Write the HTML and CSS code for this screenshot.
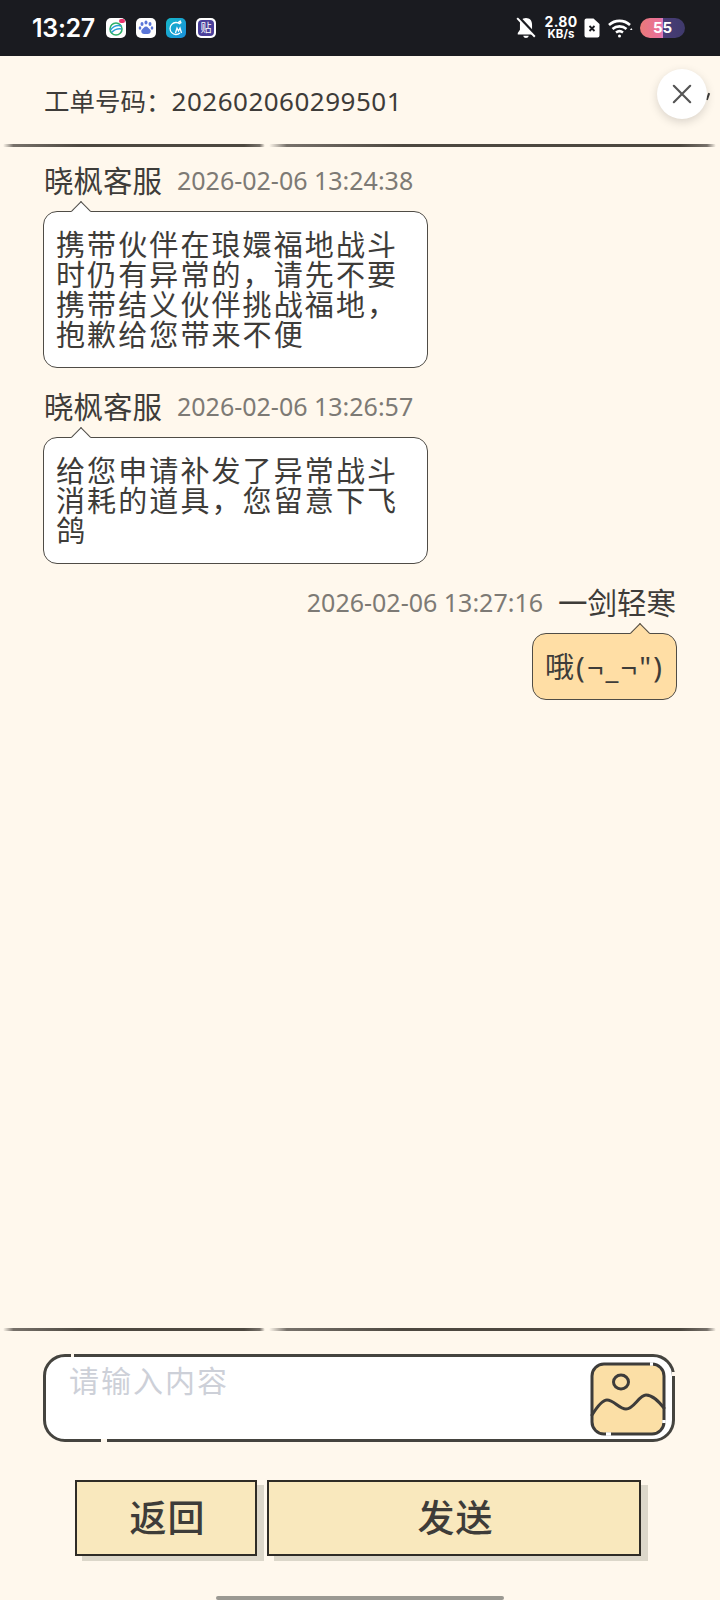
FILE: index.html
```html
<!DOCTYPE html>
<html lang="zh">

<head>
  <meta charset="utf-8">
  <title>工单详情</title>
  <link rel="stylesheet" href="styles.css">
</head>

<body>
  <div class="page">

    <div class="status">
      <div class="clock">13:27</div>
      <div class="app-icons">
        <div class="app app-white">
          <svg viewBox="0 0 20 20" width="20" height="20">
            <circle cx="10" cy="11" r="6" fill="none" stroke="#2fb06a" stroke-width="1.6" />
            <path d="M4.5 12c3-4 7-5 11-4M5.5 14.5c3-3 7-4 10-3.500" fill="none" stroke="#2c9fd8" stroke-width="1.5" />
            <rect x="13" y="1" width="6" height="4" rx="2" fill="#e8336d" />
          </svg>
        </div>
        <div class="app app-white">
          <svg viewBox="0 0 20 20" width="20" height="20" fill="#5a76d8">
            <ellipse cx="6" cy="6" rx="1.5" ry="2" />
            <ellipse cx="10" cy="4.5" rx="1.5" ry="2" />
            <ellipse cx="14" cy="6" rx="1.5" ry="2" />
            <ellipse cx="4" cy="10" rx="1.3" ry="1.8" />
            <ellipse cx="16" cy="10" rx="1.3" ry="1.8" />
            <path d="M10 8.5c-2 0-2.500 2-4 3-1.500 1.500-.5 4.500 2 4.500h4c2.500 0 3.500-3 2-4.500-1.500-1-2-3-4-3z" />
          </svg>
        </div>
        <div class="app app-teal">
          <svg viewBox="0 0 20 20" width="20" height="20" fill="none" stroke="#fff" stroke-width="1.3">
            <path d="M14 6a6 6 0 1 0 0 9" />
            <path d="M12 5a4 4 0 0 1 3-2M13.5 6a2 2 0 0 1 2-1.500" />
            <path d="M9.5 15l1.500-5 1.500 3 1.500-3 1.500 5" />
          </svg>
        </div>
        <div class="app app-white">
          <div class="app-tie">贴</div>
        </div>
      </div>

      <div class="status-right">
        <svg class="bell" viewBox="0 0 20 20" width="22" height="22">
          <path d="M10 1c-3.500 0-5.500 2.500-5.500 6v4.500L2.500 14.500v1.500h15v-1.500l-2-3V7c0-3.500-2-6-5.500-6zM7.500 17c.3 1.300 1.300 2 2.500 2s2.200-.7 2.500-2z" fill="#fff" />
          <path d="M3 0l16 17" stroke="#1a1b20" stroke-width="3" />
          <path d="M2 1l16 17" stroke="#fff" stroke-width="1.800" />
        </svg>
        <div class="speed">
          <div>2.80</div>
          <div class="speed-unit">KB/s</div>
        </div>
        <svg class="sim" viewBox="0 0 16 20" width="16" height="20">
          <path d="M2.5 0.500h7l6 5.500v11.500a2 2 0 0 1-2 2h-11a2 2 0 0 1-2-2v-15a2 2 0 0 1 2-2z" fill="#fff" />
          <path d="M5.5 8l5 5M10.500 8l-5 5" stroke="#1a1b20" stroke-width="1.8" />
        </svg>
        <svg class="wifi" viewBox="0 0 25 20" width="25" height="20" fill="none" stroke="#fff" stroke-width="2.6">
          <path d="M1 7c6-5.500 15-5.500 21 0" />
          <path d="M4.500 11c4-3.500 10-3.500 14 0" />
          <path d="M8 14.500c2-1.500 5-1.500 7 0" />
          <circle cx="11.5" cy="18" r="1.5" fill="#fff" stroke="none" />
          <path d="M22 12l2.500 0-1.200-2z" fill="#fff" stroke="none" />
        </svg>
        <div class="battery">55</div>
      </div>
    </div>

    <div class="ticket">工单号码：<span class="ticket-no">202602060299501</span></div>
    <div class="rule"><span class="rule-short"></span><span class="rule-long"></span></div>

    <div class="messages">
      <div class="msg">
        <div class="msg-head">
          <div class="msg-name">晓枫客服</div>
          <div class="msg-time">2026-02-06 13:24:38</div>
        </div>
        <div class="bubble">携带伙伴在琅嬛福地战斗时仍有异常的，请先不要携带结义伙伴挑战福地，抱歉给您带来不便</div>
      </div>

      <div class="msg">
        <div class="msg-head">
          <div class="msg-name">晓枫客服</div>
          <div class="msg-time">2026-02-06 13:26:57</div>
        </div>
        <div class="bubble">给您申请补发了异常战斗消耗的道具，您留意下飞鸽</div>
      </div>

      <div class="msg msg-mine">
        <div class="msg-head">
          <div class="msg-time">2026-02-06 13:27:16</div>
          <div class="msg-name">一剑轻寒</div>
        </div>
        <div class="bubble">哦(¬_¬")</div>
      </div>
    </div>

    <div class="rule"><span class="rule-short"></span><span class="rule-long"></span></div>

    <div class="input-wrap">
      <div class="input-box">
        <div class="placeholder">请输入内容</div>
        <svg class="pic" viewBox="0 0 78 74" width="78" height="74" fill="none" stroke="#3d3c3a" stroke-width="3" stroke-linecap="round" stroke-linejoin="round">
          <path d="M15 2h48a12 12 0 0 1 12 12v46a12 12 0 0 1-12 12H15a12 12 0 0 1-12-12V14A12 12 0 0 1 15 2z" fill="#fbdfa6" />
          <ellipse cx="32" cy="20" rx="7.5" ry="7" />
          <path d="M3 53C8 45 13 38 18 38c7 0 12 9 19 9 8 0 13-14 20-14 7 0 13 7 18 13" />
          <path d="M61 2h3M75 58v3M17 72h5" stroke="#fff" stroke-width="3.5" stroke-linecap="butt" />
        </svg>
        <span class="nick nick-top"></span>
        <span class="nick nick-bottom"></span>
        <span class="nick nick-right"></span>
      </div>
    </div>

    <div class="actions">
      <div class="btn btn-back">返回</div>
      <div class="btn btn-send">发送</div>
    </div>

    <div class="home-wrap"><div class="home-bar"></div></div>

    <div class="close-tick"></div>
    <div class="close">
      <svg viewBox="0 0 22 22" width="20" height="20" stroke="#555" stroke-width="2.4" stroke-linecap="round">
        <path d="M2 2l18 18M20 2L2 20" />
      </svg>
    </div>
  </div>
</body>

</html>
```

FILE: styles.css
```css
html,
body {
  margin: 0;
  padding: 0;
}

body {
  font-family: "Noto Sans", "Noto Sans CJK SC", sans-serif;
  color: #3e3c39;
  background: #fff8ed;
}

.page {
  position: relative;
  display: flex;
  flex-direction: column;
  width: 720px;
  height: 1600px;
  overflow: hidden;
  background: #fff8ed;
}

/* status bar */
.status {
  display: flex;
  align-items: center;
  flex-shrink: 0;
  height: 56px;
  padding: 0 35px 0 32px;
  box-sizing: border-box;
  background: #1a1b20;
  color: #fff;
}

.clock {
  width: 74px;
  font-family: "Inter", sans-serif;
  font-size: 25px;
  font-weight: 600;
  letter-spacing: -0.3px;
}

.app-icons {
  display: flex;
  gap: 10px;
}

.app {
  display: flex;
  justify-content: center;
  align-items: center;
  width: 20px;
  height: 20px;
  border-radius: 5px;
  overflow: hidden;
}

.app-white {
  background: #fff;
}

.app-teal {
  background: linear-gradient(135deg, #16b7c8, #1a8fdc);
}

.app-tie {
  width: 16px;
  height: 16px;
  border-radius: 4px;
  background: #4a3f9a;
  color: #fff;
  font-size: 11px;
  line-height: 16px;
  text-align: center;
}

.status-right {
  display: flex;
  align-items: center;
  margin-left: auto;
}

.bell {
  margin-right: 7px;
}

.speed {
  width: 34px;
  margin-right: 6px;
  font-family: "Inter", sans-serif;
  font-size: 14px;
  font-weight: 700;
  line-height: 12px;
  text-align: center;
  letter-spacing: 0.3px;
}

.speed-unit {
  font-size: 11.5px;
  letter-spacing: 0;
}

.sim {
  margin-right: 8px;
}

.wifi {
  margin-right: 7px;
}

.battery {
  width: 45px;
  height: 20px;
  border-radius: 10px;
  background: linear-gradient(90deg, #ea7a78 0, #e9709c 45%, #d97cc0 50%, #4a3d78 52%, #3f3a6c 100%);
  color: #fff;
  font-family: "Inter", sans-serif;
  font-size: 15px;
  font-weight: 700;
  line-height: 20px;
  text-align: center;
}

/* ticket number */
.ticket {
  flex-shrink: 0;
  height: 88px;
  padding-left: 44px;
  font-size: 25.5px;
  line-height: 90px;
}

.ticket-no {
  font-size: 26px;
  letter-spacing: 0.5px;
}

/* hand drawn divider */
.rule {
  display: flex;
  flex-shrink: 0;
  gap: 4px;
  height: 3px;
  padding: 0 4px 0 3px;
}

.rule span {
  display: block;
  border-radius: 2px;
  background: linear-gradient(90deg, transparent 0, #77716a 4%, #4d4840 30%, #4d4840 92%, #77716a 98%, transparent 100%);
}

.rule-short {
  width: 262px;
}

.rule-long {
  flex: 1;
}

/* chat */
.messages {
  display: flex;
  flex-direction: column;
  flex: 1;
  gap: 19px;
  padding: 14px 43px 0;
}

.msg {
  display: flex;
  flex-direction: column;
  align-items: flex-start;
}

.msg-mine {
  align-items: flex-end;
}

.msg-head {
  display: flex;
  align-items: center;
  gap: 15px;
  height: 40px;
  padding: 0 1px;
  line-height: 40px;
}

.msg-name {
  font-size: 29.5px;
}

.msg-time {
  margin-bottom: 2px;
  font-size: 25px;
  color: #7d7a75;
}

.bubble {
  position: relative;
  box-sizing: border-box;
  max-width: 385px;
  margin-top: 10px;
  padding: 17.5px 12px;
  border: 1px solid #4f4c46;
  border-radius: 14px;
  background: #fff;
  font-size: 29px;
  line-height: 30px;
  letter-spacing: 2.1px;
}

.bubble::before {
  content: "";
  position: absolute;
  left: 30px;
  top: -8px;
  width: 13px;
  height: 13px;
  border-top: 1px solid #4f4c46;
  border-left: 1px solid #4f4c46;
  background: inherit;
  transform: rotate(45deg);
}

.msg-mine .bubble {
  background: #ffdea5;
}

.msg-mine .bubble::before {
  left: auto;
  right: 29px;
}

/* input */
.input-wrap {
  flex-shrink: 0;
  padding: 23px 45px 0 43px;
}

.input-box {
  position: relative;
  display: flex;
  justify-content: space-between;
  box-sizing: border-box;
  height: 88px;
  border: 3px solid #45443f;
  border-radius: 22px;
  background: #fff;
}

.placeholder {
  padding: 4px 0 0 23px;
  font-size: 30px;
  line-height: 40px;
  letter-spacing: 2px;
  color: #cdd0d8;
}

.pic {
  margin: 5px 5px 0 0;
}

.nick {
  position: absolute;
  background: #fff8ed;
}

.nick-top {
  left: 25px;
  top: -3px;
  width: 3px;
  height: 3px;
}

.nick-bottom {
  left: 55px;
  bottom: -3px;
  width: 6px;
  height: 3px;
}

.nick-right {
  right: -3px;
  top: 15px;
  width: 3px;
  height: 4px;
}

/* buttons */
.actions {
  display: flex;
  flex-shrink: 0;
  gap: 10px;
  padding: 38px 79px 0 75px;
}

.btn {
  box-sizing: border-box;
  height: 76px;
  padding-left: 3px;
  border: 2px solid #2f2c26;
  background: #f9e8bd;
  box-shadow: 7px 5px 0 #dcd7ca;
  font-size: 37px;
  font-weight: 500;
  line-height: 72px;
  letter-spacing: 1px;
  text-align: center;
}

.btn-back {
  width: 182px;
}

.btn-send {
  flex: 1;
}

/* gesture bar */
.home-wrap {
  display: flex;
  justify-content: center;
  flex: none;
  padding-top: 40px;
}

.home-bar {
  width: 288px;
  height: 4px;
  border-radius: 2px;
  background: #9b9992;
}

/* floating close button */
.close {
  position: absolute;
  left: 657px;
  top: 69px;
  display: flex;
  justify-content: center;
  align-items: center;
  width: 50px;
  height: 50px;
  border-radius: 50%;
  background: #fff;
  box-shadow: 0 3px 10px rgba(0, 0, 0, 0.15);
}

.close-tick {
  position: absolute;
  left: 707px;
  top: 93px;
  width: 2px;
  height: 7px;
  background: #3d3c3a;
  transform: rotate(20deg);
}
```
